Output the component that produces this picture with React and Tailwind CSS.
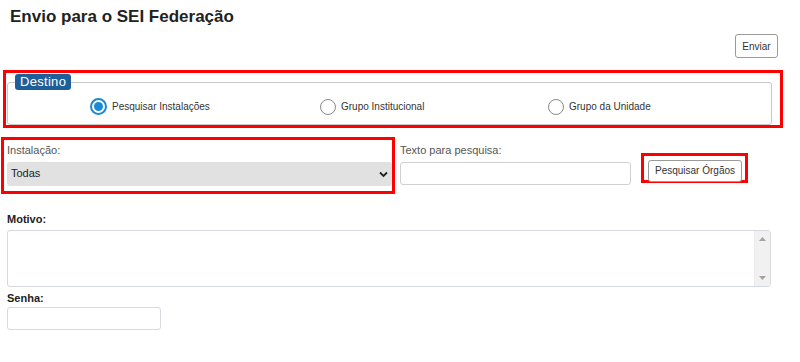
import { useState } from "react";

const Radio = ({ checked, label, onClick, className }) => (
  <label className={`flex items-center gap-[5px] cursor-pointer ${className}`} onClick={onClick}>
    {checked ? (
      <span className="flex h-[17px] w-[17px] items-center justify-center rounded-full border-2 border-[#1a8ad4] bg-white">
        <span className="h-[9px] w-[9px] rounded-full bg-[#1a8ad4]" />
      </span>
    ) : (
      <span className="h-[16px] w-[16px] rounded-full border border-[#8a8a8a] bg-white" />
    )}
    <span className="text-[10px] text-[#333]">{label}</span>
  </label>
);

const App = () => {
  const [destino, setDestino] = useState("instalacoes");

  return (
    <div className="relative h-[362px] w-[800px] bg-white font-['Liberation_Sans',Arial,sans-serif] text-[#333]">
      <h1 className="pl-[10px] pt-[7px] text-[17px] font-bold leading-[20px] text-[#222]">Envio para o SEI Federação</h1>

      <div className="flex justify-end pr-[22px] pt-[7px]">
        <button className="h-[24px] w-[43px] rounded-[3px] border border-[#9a9a9a] bg-white text-[10px] text-[#333]">
          Enviar
        </button>
      </div>

      <div className="mx-[3px] mt-[12px] w-[780px] border-[3px] border-[#ff0000] pl-[1px] pt-[1px]">
        <fieldset className="h-[51px] w-[765px] rounded-[3px] border border-[#c8c8c8] px-0 pt-0">
          <legend className="ml-[7px] rounded-[3px] bg-[#1f5f99] px-[5px] text-[13px] leading-[16px] tracking-[0.3px] text-white">
            Destino
          </legend>
          <div className="flex items-center pl-[82px] pt-[8px]">
            <Radio
              className="w-[230px]"
              checked={destino === "instalacoes"}
              label="Pesquisar Instalações"
              onClick={() => setDestino("instalacoes")}
            />
            <Radio
              className="w-[228px]"
              checked={destino === "institucional"}
              label="Grupo Institucional"
              onClick={() => setDestino("institucional")}
            />
            <Radio
              checked={destino === "unidade"}
              label="Grupo da Unidade"
              onClick={() => setDestino("unidade")}
            />
          </div>
        </fieldset>
      </div>

      <div className="mt-[9px] flex items-start">
        <div className="ml-[1px] h-[57px] w-[394px] border-[3px] border-[#ff0000] pl-[3px] pt-[3px]">
          <div className="text-[11px] leading-[14px] text-[#555]">Instalação:</div>
          <div className="relative mt-[5px] h-[24px] w-[385px] rounded-[3px] bg-[#e1e1e1]">
            <span className="absolute left-[4px] top-[5px] text-[11px] leading-[13px] text-[#222]">Todas</span>
            <svg className="absolute right-[4px] top-[9px]" width="9" height="7" viewBox="0 0 9 7">
              <path d="M1 1.5 L4.5 5 L8 1.5" fill="none" stroke="#222" strokeWidth="1.8" />
            </svg>
          </div>
        </div>

        <div className="ml-[5px] pt-[6px]">
          <div className="text-[11px] leading-[14px] text-[#555]">Texto para pesquisa:</div>
          <input className="mt-[5px] block h-[23px] w-[231px] rounded-[3px] border border-[#d0d0d0] bg-white outline-none" />
        </div>

        <div className="ml-[10px] mt-[16px] h-[30px] w-[107px] border-[3px] border-[#ff0000] pl-[4px] pt-[1px]">
          <button className="h-[22px] w-[94px] rounded-[3px] border border-[#9a9a9a] bg-white text-[10px] text-[#333]">
            Pesquisar Órgãos
          </button>
        </div>
      </div>

      <div className="ml-[7px] mt-[18px] text-[11px] font-bold leading-[14px] text-[#222]">Motivo:</div>
      <div className="ml-[7px] mt-[4px] flex h-[57px] w-[764px] rounded-[3px] border border-[#d6d9de] bg-white">
        <textarea className="h-full flex-1 resize-none bg-transparent outline-none" />
        <div className="flex w-[16px] flex-col items-center justify-between border-l border-[#ececec] bg-[#f1f1f1] py-[6px]">
          <svg width="7" height="4" viewBox="0 0 7 4"><path d="M0 4 L3.5 0 L7 4 Z" fill="#a3a3a3" /></svg>
          <svg width="7" height="4" viewBox="0 0 7 4"><path d="M0 0 L3.5 4 L7 0 Z" fill="#a3a3a3" /></svg>
        </div>
      </div>

      <div className="ml-[7px] mt-[4px] text-[11px] font-bold leading-[14px] text-[#222]">Senha:</div>
      <input
        type="password"
        className="ml-[7px] mt-[2px] block h-[23px] w-[154px] rounded-[3px] border border-[#d6d9de] bg-white outline-none"
      />
    </div>
  );
};

export default App;
